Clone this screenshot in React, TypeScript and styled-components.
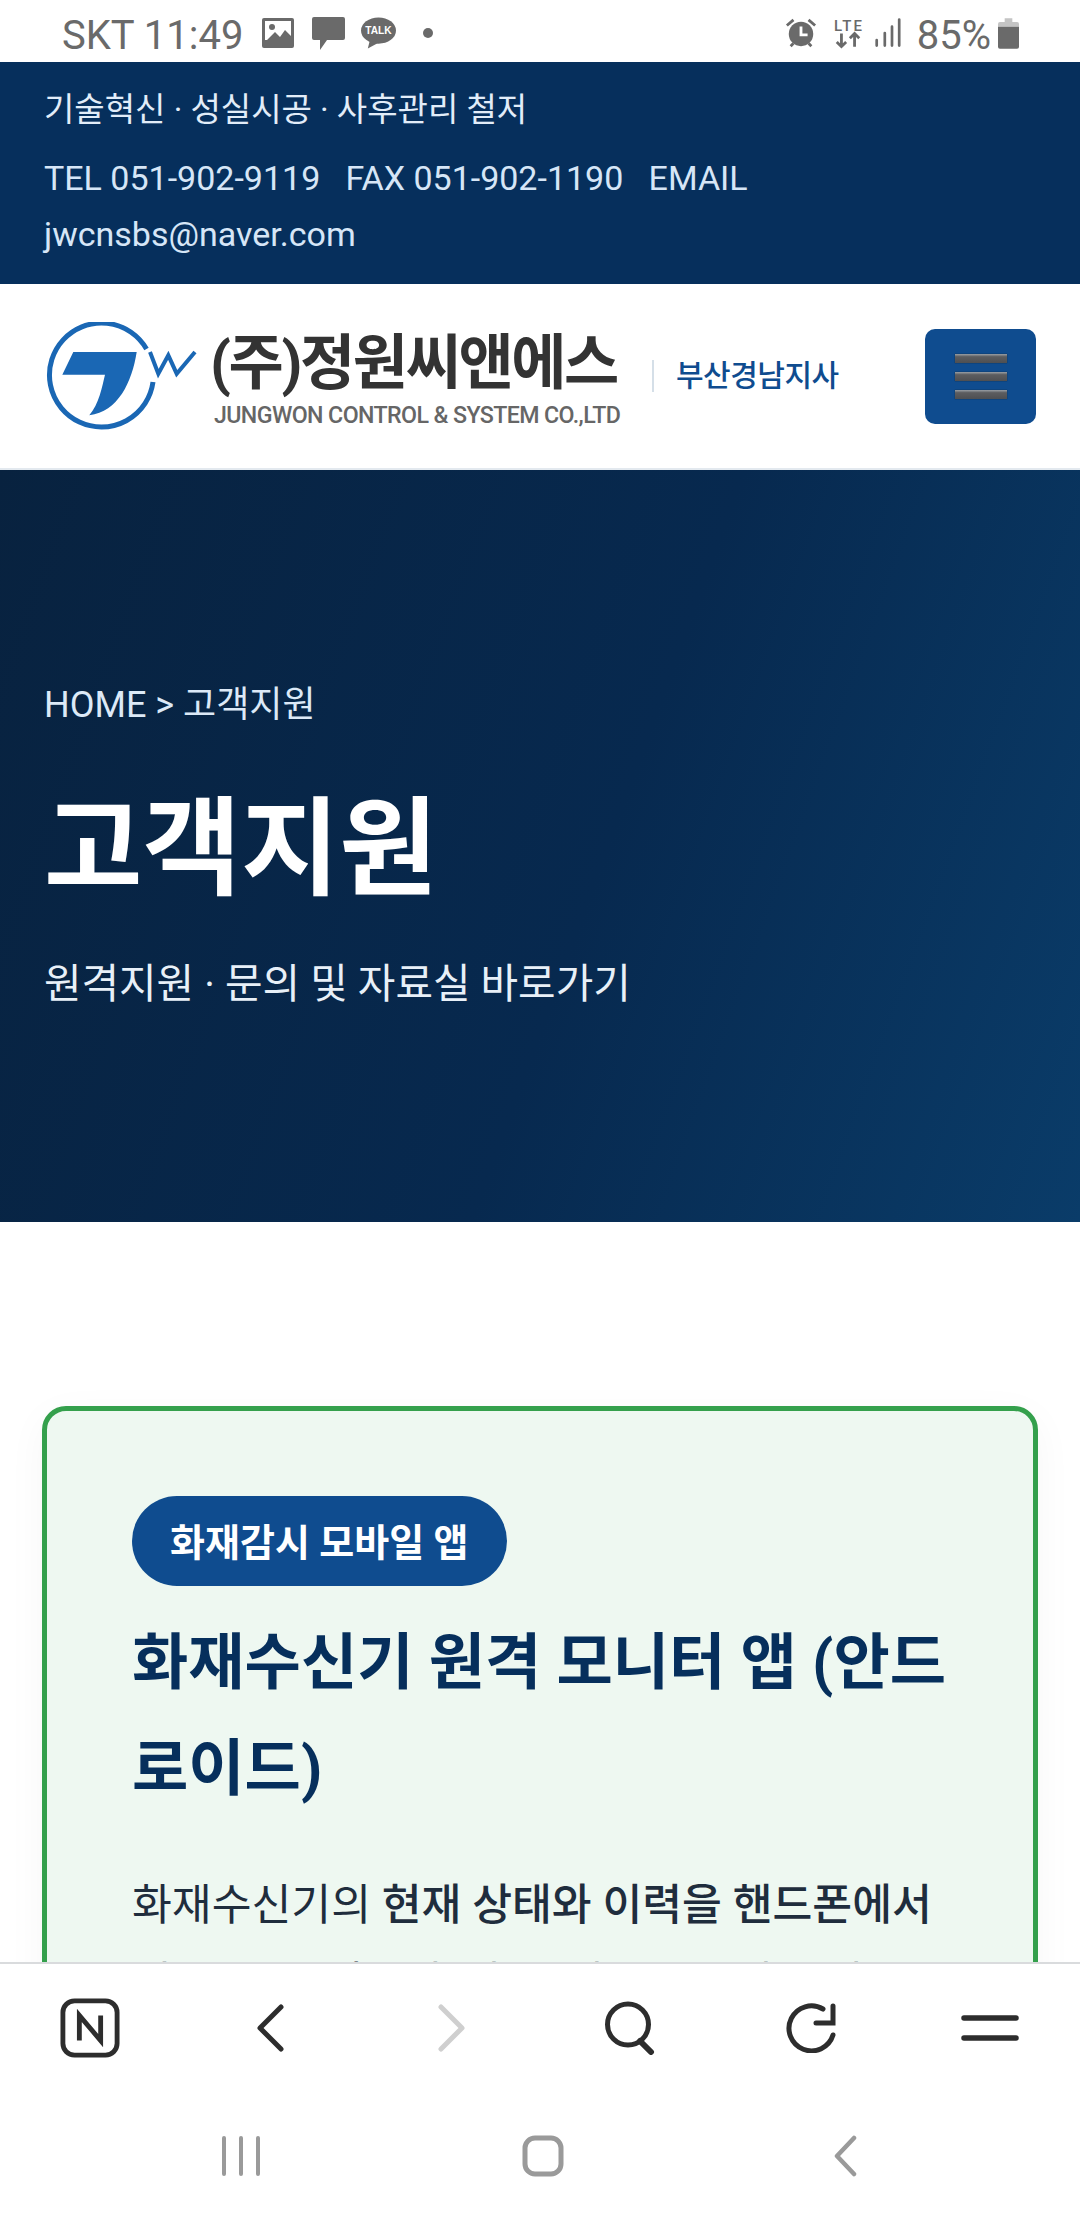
import React from "react";
import styled, { createGlobalStyle } from "styled-components";

const Global = createGlobalStyle`
  html, body { margin: 0; padding: 0; background: #fff; }
  body { font-family: Roboto, "Noto Sans CJK KR", sans-serif; }
  * { box-sizing: border-box; }
`;

const Screen = styled.div`
  width: 1080px;
  height: 2220px;
  display: flex;
  flex-direction: column;
  overflow: hidden;
  background: #fff;
`;

const StatusBar = styled.div`
  flex: 0 0 62px;
  display: flex;
  align-items: center;
  justify-content: space-between;
  padding: 4px 61px 0 62px;
  color: #6a6a6a;
  font-size: 40px;
`;

const StatusGroup = styled.div`
  display: flex;
  align-items: center;
`;

const StatusText = styled.span<{ $gap?: number }>`
  line-height: 52px;
  padding-top: 6px;
  margin-left: ${(p) => p.$gap ?? 0}px;
`;

const StatusIcon = styled.svg<{ $gap?: number }>`
  display: block;
  flex: none;
  margin-left: ${(p) => p.$gap ?? 0}px;
`;

const Viewport = styled.div`
  flex: 1;
  min-height: 0;
  overflow: hidden;
`;

const TopInfo = styled.div`
  height: 222px;
  background: #062f5c;
  color: #d6e6f7;
  padding: 26px 44px 0;
`;

const Slogan = styled.div`
  font-size: 33px;
  line-height: 44px;
  margin-bottom: 18px;
  color: #e2edf9;
`;

const Contact = styled.div`
  font-size: 34px;
  line-height: 56px;
  white-space: pre-wrap;
`;

const Header = styled.div`
  height: 186px;
  background: #fff;
  border-bottom: 2px solid #e3e9ef;
  display: flex;
  align-items: center;
  justify-content: space-between;
  padding: 0 44px;
`;

const Brand = styled.div`
  display: flex;
  align-items: center;
`;

const LogoMark = styled.svg`
  display: block;
  flex: none;
  margin-top: 4px;
`;

const BrandWords = styled.div`
  display: flex;
  flex-direction: column;
  margin-left: 10px;
  padding-top: 6px;
  width: 412px;
`;

const BrandName = styled.div`
  font-size: 60px;
  font-weight: 700;
  line-height: 66px;
  color: #333;
  letter-spacing: -2.4px;
  white-space: nowrap;
`;

const BrandSub = styled.div`
  font-size: 23.2px;
  font-weight: 500;
  line-height: 26px;
  color: #666;
  letter-spacing: -0.6px;
  white-space: nowrap;
  margin: 5px 0 0 4px;
`;

const Branch = styled.div`
  margin-left: 30px;
  padding-left: 22px;
  border-left: 2px solid #d5dfe8;
  font-size: 30px;
  font-weight: 500;
  line-height: 32px;
  color: #0f4c8f;
  letter-spacing: -0.5px;
  white-space: nowrap;
`;

const MenuButton = styled.div`
  width: 111px;
  height: 95px;
  background: #0f4c8f;
  border-radius: 10px;
  display: flex;
  flex-direction: column;
  align-items: center;
  justify-content: center;
  gap: 9px;
`;

const MenuBar = styled.span`
  width: 52px;
  height: 9px;
  background: linear-gradient(#9aa0a6 0, #5c5d60 30%, #4e4f52 100%);
  box-shadow: 0 0 1px #123;
`;

const Hero = styled.div`
  height: 752px;
  background: linear-gradient(110deg, #08223f 0%, #07294f 55%, #0a3c69 100%);
  color: #fff;
  padding: 0 44px;
  display: flex;
  flex-direction: column;
`;

const Crumb = styled.div`
  margin-top: 210px;
  font-size: 36px;
  line-height: 50px;
  color: #dce9f7;
`;

const HeroTitle = styled.div`
  margin-top: 56px;
  font-size: 107px;
  font-weight: 700;
  line-height: 128px;
`;

const HeroSub = styled.div`
  margin-top: 43px;
  font-size: 40.8px;
  line-height: 54px;
  color: #e8f0f8;
`;

const Main = styled.div`
  padding: 184px 42px 0;
`;

const Card = styled.div`
  border: 5px solid #34a04c;
  border-radius: 24px;
  background: #eef8f1;
  padding: 85px 85px 200px;
  box-shadow: 0 10px 40px rgba(0, 0, 0, 0.04);
`;

const Badge = styled.div`
  display: inline-flex;
  align-items: center;
  height: 90px;
  padding: 0 38px 4px;
  border-radius: 45px;
  background: #0f4c8f;
  color: #fff;
  font-size: 38px;
  font-weight: 700;
  white-space: nowrap;
`;

const CardTitle = styled.div`
  margin-top: 24px;
  font-size: 61.2px;
  font-weight: 700;
  line-height: 106px;
  color: #062f5c;
`;

const CardBody = styled.div`
  margin-top: 45px;
  font-size: 43.3px;
  line-height: 78px;
  color: #1f2d3d;
`;

const Strong = styled.strong`
  font-weight: 500;
`;

const BottomNav = styled.div`
  flex: 0 0 258px;
  background: #fff;
  border-top: 2px solid #d9dbdd;
  display: flex;
  flex-direction: column;
`;

const BrowserBar = styled.div`
  height: 128px;
  display: grid;
  grid-template-columns: repeat(6, 180px);
  align-items: center;
  justify-items: center;
`;

const SystemBar = styled.div`
  flex: 1;
  display: grid;
  grid-template-columns: repeat(3, 302px);
  justify-content: center;
  align-items: center;
  justify-items: center;
  padding-left: 6px;
`;

const NavIcon = styled.svg<{ $shift?: number }>`
  display: block;
  margin-left: ${(p) => p.$shift ?? 0}px;
`;

const Dot = styled.span`
  width: 10px;
  height: 10px;
  border-radius: 50%;
  background: #6a6a6a;
  margin-left: 27px;
`;

const TalkLabel = styled.text`
  font-family: "Liberation Sans", sans-serif;
  font-size: 10.5px;
  font-weight: 700;
  fill: #fff;
`;

const LteLabel = styled.text`
  font-family: Roboto, sans-serif;
  font-size: 16px;
  font-weight: 500;
  fill: #6a6a6a;
`;

const Logo = () => (
  <LogoMark width="156" height="112" viewBox="0 0 156 112">
    <path d="M102.5 27 A52 52 0 1 0 109 60" fill="none" stroke="#1a67b4" strokeWidth="5" />
    <path d="M29.3 30 H92.7 C88 60 74 90 45.3 93.3 C55 82 58 65 61 52.7 H18.3 Z" fill="#1a67b4" />
    <path d="M106 30 L114.3 51.7 L124.3 33.3 L132.7 51.7 L151 30" fill="none" stroke="#1a67b4" strokeWidth="4" />
  </LogoMark>
);

export default function App() {
  return (
    <>
      <Global />
      <Screen>
        <StatusBar>
          <StatusGroup>
            <StatusText>SKT 11:49</StatusText>
            <StatusIcon $gap={19} width="32" height="30" viewBox="0 0 32 30">
              <rect width="32" height="30" rx="2" fill="#6a6a6a" />
              <rect x="3" y="3" width="26" height="19" fill="#fff" />
              <circle cx="10" cy="9" r="3" fill="#6a6a6a" />
              <path d="M3 24 L13 14 L18 19 L23 12 L29 18 V24 Z" fill="#6a6a6a" />
            </StatusIcon>
            <StatusIcon $gap={18} width="33" height="33" viewBox="0 0 33 33">
              <path d="M2 0 H31 A2 2 0 0 1 33 2 V21 A2 2 0 0 1 31 23 H15 L8 33 V23 H2 A2 2 0 0 1 0 21 V2 A2 2 0 0 1 2 0 Z" fill="#6a6a6a" />
            </StatusIcon>
            <StatusIcon $gap={16} width="35" height="32" viewBox="0 0 36 32">
              <ellipse cx="18" cy="13.5" rx="18" ry="13.5" fill="#6a6a6a" />
              <path d="M9 24 L7 32 L18 26 Z" fill="#6a6a6a" />
              <TalkLabel x="18" y="17" textAnchor="middle">TALK</TalkLabel>
            </StatusIcon>
            <Dot />
          </StatusGroup>
          <StatusGroup>
            <StatusIcon width="32" height="32" viewBox="0 0 34 34">
              <circle cx="17" cy="18" r="13" fill="#6a6a6a" />
              <path d="M17 10 V19 H24" fill="none" stroke="#fff" strokeWidth="3" />
              <path d="M2 9 L9 3 M32 9 L25 3 M6 31 L9 28 M28 31 L25 28" stroke="#6a6a6a" strokeWidth="3" />
            </StatusIcon>
            <StatusIcon $gap={16} width="30" height="33" viewBox="0 0 32 34">
              <LteLabel x="16" y="14" textAnchor="middle" textLength="30">LTE</LteLabel>
              <path d="M9 17 V31 M4 26 L9 31 L14 26 M23 31 V17 M18 22 L23 17 L28 22" fill="none" stroke="#6a6a6a" strokeWidth="3" />
            </StatusIcon>
            <StatusIcon $gap={11} width="27" height="30" viewBox="0 0 30 32">
              <path d="M3 24 V30 M12 16 V30 M20 9 V30 M28 1 V30" stroke="#6a6a6a" strokeWidth="3" strokeLinecap="round" />
            </StatusIcon>
            <StatusText $gap={16}>85%</StatusText>
            <StatusIcon $gap={7} width="21" height="33" viewBox="0 0 22 34">
              <path d="M7 1 H15 V5 H20 A2 2 0 0 1 22 7 V10 H0 V7 A2 2 0 0 1 2 5 H7 Z" fill="#c4c4c4" />
              <path d="M0 10 H22 V31 A2 2 0 0 1 20 33 H2 A2 2 0 0 1 0 31 Z" fill="#6a6a6a" />
            </StatusIcon>
          </StatusGroup>
        </StatusBar>

        <Viewport>
          <TopInfo>
            <Slogan>기술혁신 · 성실시공 · 사후관리 철저</Slogan>
            <Contact>{"TEL 051-902-9119   FAX 051-902-1190   EMAIL jwcnsbs@naver.com"}</Contact>
          </TopInfo>

          <Header>
            <Brand>
              <Logo />
              <BrandWords>
                <BrandName>(주)정원씨앤에스</BrandName>
                <BrandSub>JUNGWON CONTROL &amp; SYSTEM CO.,LTD</BrandSub>
              </BrandWords>
              <Branch>부산경남지사</Branch>
            </Brand>
            <MenuButton>
              <MenuBar />
              <MenuBar />
              <MenuBar />
            </MenuButton>
          </Header>

          <Hero>
            <Crumb>HOME &gt; 고객지원</Crumb>
            <HeroTitle>고객지원</HeroTitle>
            <HeroSub>원격지원 · 문의 및 자료실 바로가기</HeroSub>
          </Hero>

          <Main>
            <Card>
              <Badge>화재감시 모바일 앱</Badge>
              <CardTitle>화재수신기 원격 모니터 앱 (안드로이드)</CardTitle>
              <CardBody>
                화재수신기의 <Strong>현재 상태와 이력을 핸드폰에서</Strong> 실시간으로 확인합니다. 해외 어디서나 실시간 관제
              </CardBody>
            </Card>
          </Main>
        </Viewport>

        <BottomNav>
          <BrowserBar>
            <NavIcon width="60" height="60" viewBox="0 0 62 62">
              <rect x="3" y="3" width="56" height="56" rx="12" fill="none" stroke="#2d2d2d" strokeWidth="5" />
              <path d="M20 44 V18 L42 44 V18" fill="none" stroke="#2d2d2d" strokeWidth="5" />
            </NavIcon>
            <NavIcon width="28" height="48" viewBox="0 0 28 48">
              <path d="M25 3 L4 24 L25 45" fill="none" stroke="#2d2d2d" strokeWidth="5" strokeLinecap="round" strokeLinejoin="round" />
            </NavIcon>
            <NavIcon $shift={4} width="28" height="48" viewBox="0 0 28 48">
              <path d="M3 3 L24 24 L3 45" fill="none" stroke="#cfcfcf" strokeWidth="5" strokeLinecap="round" strokeLinejoin="round" />
            </NavIcon>
            <NavIcon width="50" height="54" viewBox="0 0 50 54">
              <circle cx="23" cy="23.5" r="20.5" fill="none" stroke="#2d2d2d" strokeWidth="5" />
              <path d="M35 40 L46 51" stroke="#2d2d2d" strokeWidth="6" strokeLinecap="round" />
            </NavIcon>
            <NavIcon width="51" height="50" viewBox="0 0 51 50">
              <path d="M48 32 A22.5 22.5 0 1 1 38 6" fill="none" stroke="#2d2d2d" strokeWidth="5" strokeLinecap="round" />
              <path d="M48 3 V20 H31" fill="none" stroke="#2d2d2d" strokeWidth="5" strokeLinecap="round" />
            </NavIcon>
            <NavIcon width="58" height="26" viewBox="0 0 58 26">
              <path d="M3 3 H55 M3 23 H55" stroke="#2d2d2d" strokeWidth="5.5" strokeLinecap="round" />
            </NavIcon>
          </BrowserBar>
          <SystemBar>
            <NavIcon width="40" height="40" viewBox="0 0 40 40">
              <path d="M3 2 V38 M20 2 V38 M37 2 V38" stroke="#9a9a9a" strokeWidth="4" strokeLinecap="round" />
            </NavIcon>
            <NavIcon width="42" height="42" viewBox="0 0 42 42">
              <rect x="3" y="3" width="36" height="36" rx="10" fill="none" stroke="#9a9a9a" strokeWidth="5" />
            </NavIcon>
            <NavIcon width="26" height="42" viewBox="0 0 26 42">
              <path d="M22 3 L5 21 L22 39" fill="none" stroke="#9a9a9a" strokeWidth="4.5" strokeLinecap="round" strokeLinejoin="round" />
            </NavIcon>
          </SystemBar>
        </BottomNav>
      </Screen>
    </>
  );
}
